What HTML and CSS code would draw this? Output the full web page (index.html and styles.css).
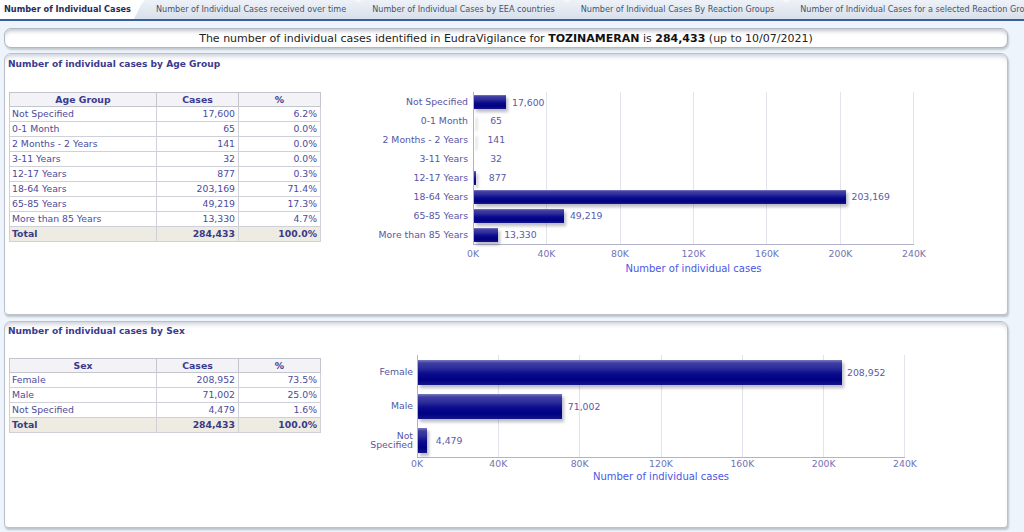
FILE: index.html
```html
<!DOCTYPE html>
<html>
<head>
<meta charset="utf-8">
<title>Number of Individual Cases</title>
<link rel="stylesheet" href="styles.css">
</head>
<body>
<div class="tabs">
  <div class="tab-active">Number of Individual Cases</div>
  <div class="tab">Number of Individual Cases received over time</div>
  <div class="tab">Number of Individual Cases by EEA countries</div>
  <div class="tab">Number of Individual Cases By Reaction Groups</div>
  <div class="tab">Number of Individual Cases for a selected Reaction Group</div>
</div>
<div class="page">
  <div class="summary">The number of individual cases identified in EudraVigilance for <b>TOZINAMERAN</b> is <b>284,433</b> (up to 10/07/2021)</div>

  <div class="panel panel-age">
    <div class="panel-title">Number of individual cases by Age Group</div>
    <div class="panel-body">
      <table class="data-table">
        <colgroup><col class="c1"><col class="c2"><col class="c3"></colgroup>
        <tr><th>Age Group</th><th>Cases</th><th>%</th></tr>
        <tr><td>Not Specified</td><td class="num">17,600</td><td class="num">6.2%</td></tr>
        <tr><td>0-1 Month</td><td class="num">65</td><td class="num">0.0%</td></tr>
        <tr><td>2 Months - 2 Years</td><td class="num">141</td><td class="num">0.0%</td></tr>
        <tr><td>3-11 Years</td><td class="num">32</td><td class="num">0.0%</td></tr>
        <tr><td>12-17 Years</td><td class="num">877</td><td class="num">0.3%</td></tr>
        <tr><td>18-64 Years</td><td class="num">203,169</td><td class="num">71.4%</td></tr>
        <tr><td>65-85 Years</td><td class="num">49,219</td><td class="num">17.3%</td></tr>
        <tr><td>More than 85 Years</td><td class="num">13,330</td><td class="num">4.7%</td></tr>
        <tr class="total"><td>Total</td><td class="num">284,433</td><td class="num">100.0%</td></tr>
      </table>

      <div class="chart chart-age">
        <div class="chart-main">
          <div class="cats">
            <div class="cat">Not Specified</div>
            <div class="cat">0-1 Month</div>
            <div class="cat">2 Months - 2 Years</div>
            <div class="cat">3-11 Years</div>
            <div class="cat">12-17 Years</div>
            <div class="cat">18-64 Years</div>
            <div class="cat">65-85 Years</div>
            <div class="cat">More than 85 Years</div>
          </div>
          <div class="plot">
            <div class="row"><div class="bar" style="width:32.27px"></div><span class="val">17,600</span></div>
            <div class="row"><div class="bar" style="width:0.12px"></div><span class="val">65</span></div>
            <div class="row"><div class="bar" style="width:0.26px"></div><span class="val">141</span></div>
            <div class="row"><div class="bar" style="width:0.06px"></div><span class="val">32</span></div>
            <div class="row"><div class="bar" style="width:1.61px"></div><span class="val">877</span></div>
            <div class="row"><div class="bar" style="width:372.48px"></div><span class="val">203,169</span></div>
            <div class="row"><div class="bar" style="width:90.23px"></div><span class="val">49,219</span></div>
            <div class="row"><div class="bar" style="width:24.44px"></div><span class="val">13,330</span></div>
          </div>
        </div>
        <div class="axis">
          <div class="ticks">
            <span class="tick">0K</span><span class="tick">40K</span><span class="tick">80K</span><span class="tick">120K</span><span class="tick">160K</span><span class="tick">200K</span><span class="tick">240K</span>
          </div>
          <div class="axis-title">Number of individual cases</div>
        </div>
      </div>
    </div>
  </div>

  <div class="panel panel-sex">
    <div class="panel-title">Number of individual cases by Sex</div>
    <div class="panel-body">
      <table class="data-table">
        <colgroup><col class="c1"><col class="c2"><col class="c3"></colgroup>
        <tr><th>Sex</th><th>Cases</th><th>%</th></tr>
        <tr><td>Female</td><td class="num">208,952</td><td class="num">73.5%</td></tr>
        <tr><td>Male</td><td class="num">71,002</td><td class="num">25.0%</td></tr>
        <tr><td>Not Specified</td><td class="num">4,479</td><td class="num">1.6%</td></tr>
        <tr class="total"><td>Total</td><td class="num">284,433</td><td class="num">100.0%</td></tr>
      </table>

      <div class="chart chart-sex">
        <div class="chart-main">
          <div class="cats">
            <div class="cat">Female</div>
            <div class="cat">Male</div>
            <div class="cat">Not<br>Specified</div>
          </div>
          <div class="plot">
            <div class="row"><div class="bar" style="width:424.03px"></div><span class="val">208,952</span></div>
            <div class="row"><div class="bar" style="width:144.08px"></div><span class="val">71,002</span></div>
            <div class="row"><div class="bar" style="width:9.09px"></div><span class="val">4,479</span></div>
          </div>
        </div>
        <div class="axis">
          <div class="ticks">
            <span class="tick">0K</span><span class="tick">40K</span><span class="tick">80K</span><span class="tick">120K</span><span class="tick">160K</span><span class="tick">200K</span><span class="tick">240K</span>
          </div>
          <div class="axis-title">Number of individual cases</div>
        </div>
      </div>
    </div>
  </div>
</div>
</body>
</html>
```

FILE: styles.css
```css
html, body {
  margin: 0;
  padding: 0;
}
body {
  width: 1024px;
  height: 532px;
  overflow: hidden;
  background: #eef4fc;
  font-family: "DejaVu Sans", Verdana, sans-serif;
}

/* tabs */
.tabs {
  display: flex;
  height: 19px;
  background: #f6f8fb;
  border-bottom: 2px solid #3a5d9c;
  white-space: nowrap;
  overflow: hidden;
  font-size: 8.1px;
  line-height: 19px;
}
.tab-active {
  flex-shrink: 0;
  padding: 0 13px 0 4px;
  background: #ffffff;
  color: #1f2d57;
  font-weight: bold;
  font-size: 8.2px;
}
.tab {
  flex-shrink: 0;
  margin-left: -10px;
  padding: 0 14px 0 22px;
  background: linear-gradient(#eef2f8, #d8e0ea);
  color: #45536e;
  border-top-right-radius: 8px;
  clip-path: polygon(0 100%, 8px 3px, 12px 0, 100% 0, 100% 100%);
}

/* page */
.page {
  padding: 7px 16px 0 4px;
}
.summary {
  height: 18px;
  border: 1px solid #b3b7c4;
  border-radius: 7px;
  background: #ffffff;
  box-shadow: inset 0 4px 4px -2px #bfc3cf, 1px 2px 2px rgba(0, 0, 0, 0.18);
  text-align: center;
  font-size: 11px;
  line-height: 19px;
  color: #222222;
}
.summary b {
  color: #111111;
}

.panel {
  box-sizing: border-box;
  margin-top: 5px;
  border: 1px solid #bcc0ca;
  border-radius: 7px 7px 4px 4px;
  background: #ffffff;
  box-shadow: inset 0 5px 5px -3px #c9ccd7, 1px 2px 2px rgba(0, 0, 0, 0.2);
}
.panel-age {
  height: 262px;
}
.panel-sex {
  height: 207px;
  margin-top: 6px;
}
.panel-title {
  padding: 4px 0 0 3px;
  font-size: 9.1px;
  line-height: 13px;
  font-weight: bold;
  color: #3b3b8e;
}
.panel-sex .panel-title {
  padding-top: 3px;
}
.panel-body {
  display: flex;
  align-items: flex-start;
}
.panel-age .panel-body {
  margin-top: 21px;
}
.panel-sex .panel-body {
  margin-top: 17px;
}

/* tables */
.data-table {
  margin-left: 4px;
  width: 311px;
  border-collapse: collapse;
  border: 1px solid #a6a6b0;
  font-size: 9.3px;
  color: #4b4b9c;
  table-layout: fixed;
}
.panel-sex .data-table {
  margin-top: 3px;
}
.c1 { width: 147px; }
.c2 { width: 82px; }
.c3 { width: 82px; }
.data-table th {
  height: 13px;
  line-height: 13px;
  padding: 0;
  background: #f2f2f7;
  border: 1px solid #c4c4cd;
  font-weight: bold;
  color: #3a3a90;
  text-align: center;
}
.data-table td {
  height: 14px;
  line-height: 14px;
  padding: 0 3px 0 2px;
  border: 1px solid #d0d0d8;
  white-space: nowrap;
}
.data-table td.num {
  text-align: right;
}
.data-table tr.total td {
  background: #eeebe2;
  font-weight: bold;
  color: #3a3a86;
}

/* charts */
.chart {
  font-size: 9.3px;
  color: #5656a6;
}
.chart-age {
  margin-left: 32px;
}
.chart-sex {
  margin-left: 16px;
}
.chart-main {
  display: flex;
}
.cats {
  width: 115px;
  padding-right: 5px;
}
.chart-sex .cats {
  width: 76px;
  padding-right: 4px;
}
.cat {
  height: 19px;
  display: flex;
  align-items: center;
  justify-content: flex-end;
  text-align: right;
  white-space: nowrap;
}
.chart-sex .cat {
  height: 34px;
  line-height: 9.5px;
}
.plot {
  width: 440px;
  border-left: 1px solid #b2b2ca;
  border-bottom: 1px solid #b2b2ca;
  background: repeating-linear-gradient(to right, transparent 0 72.333px, #e3e3ec 72.333px 73.333px);
}
.chart-sex .plot {
  width: 487px;
  background: repeating-linear-gradient(to right, transparent 0 80.167px, #e3e3ec 80.167px 81.167px);
}
.row {
  height: 19px;
  display: flex;
  align-items: center;
}
.chart-age .row:first-child {
  margin-top: 1px;
  height: 18px;
}
.chart-sex .row {
  height: 34px;
}
.bar {
  flex-shrink: 0;
  height: 14px;
  background: linear-gradient(to bottom, #7a7ac0 0%, #3e3ea4 12%, #30309c 30%, #0b0b8e 55%, #000082 80%, #16168a 100%);
  box-shadow: 2px 3px 3px rgba(60, 60, 90, 0.35);
}
.chart-sex .bar {
  height: 25px;
}
.val {
  margin-left: 5px;
  min-width: 34px;
  text-align: center;
  white-space: nowrap;
  color: #5a5aa8;
}
.axis {
  margin-left: 120px;
}
.chart-sex .axis {
  margin-left: 80px;
}
.ticks {
  width: 441px;
  margin-top: 3px;
  display: flex;
  justify-content: space-between;
  line-height: 12px;
  color: #7373b3;
}
.chart-sex .ticks {
  width: 488px;
  margin-top: 0;
}
.tick {
  width: 0;
  display: flex;
  justify-content: center;
  white-space: nowrap;
}
.axis-title {
  width: 441px;
  margin-top: 2px;
  text-align: center;
  font-size: 10px;
  line-height: 13px;
  color: #4a56e8;
}
.chart-sex .axis-title {
  width: 488px;
  margin-top: 0;
}
```
